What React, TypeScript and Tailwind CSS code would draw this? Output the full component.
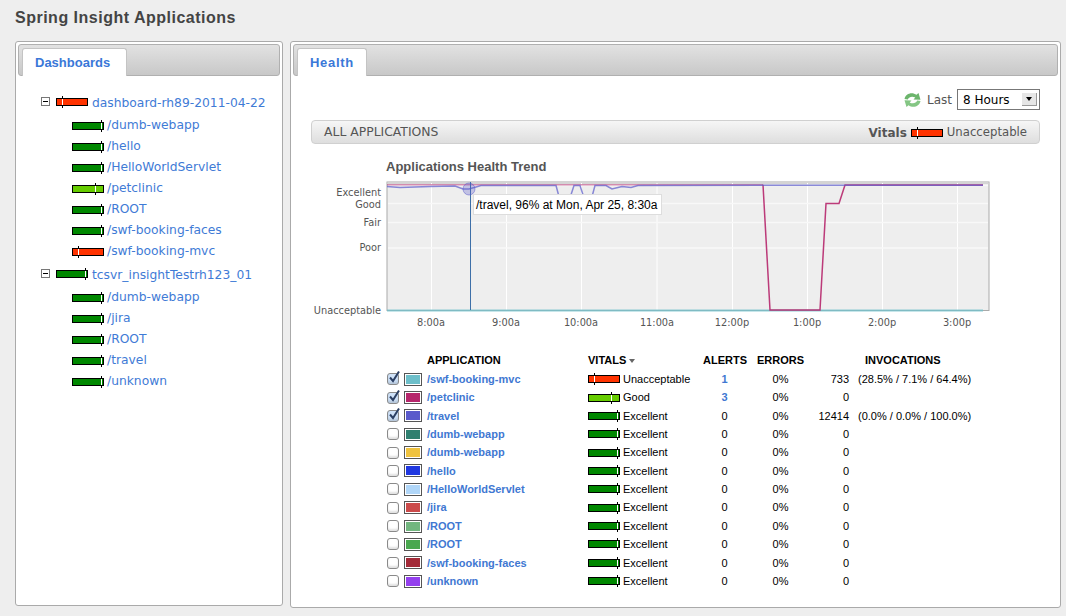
import React from 'react';

type Health = 'bad' | 'good' | 'ok';

const bars: Record<Health, { fill: string; tick: string }> = {
    bad: { fill: 'bg-[#ff3300]', tick: 'left-[5px]' },
    ok: { fill: 'bg-[#66cc00]', tick: 'left-[22px]' },
    good: { fill: 'bg-[#008800]', tick: 'left-[28px]' },
};

const VitalBar = ({ health }: { health: Health }) => (
    <span className={`relative block h-[8px] w-[32px] shrink-0 border border-black ${bars[health].fill}`}>
        <span className={`absolute top-[-3px] h-[12px] w-px bg-black ${bars[health].tick}`} />
        <span className={`absolute top-0 h-[6px] w-px bg-white ${bars[health].tick}`} />
    </span>
);

const treeGroups: { name: string; health: Health; apps: { name: string; health: Health }[] }[] = [
    {
        name: 'dashboard-rh89-2011-04-22',
        health: 'bad',
        apps: [
            { name: '/dumb-webapp', health: 'good' },
            { name: '/hello', health: 'good' },
            { name: '/HelloWorldServlet', health: 'good' },
            { name: '/petclinic', health: 'ok' },
            { name: '/ROOT', health: 'good' },
            { name: '/swf-booking-faces', health: 'good' },
            { name: '/swf-booking-mvc', health: 'bad' },
        ],
    },
    {
        name: 'tcsvr_insightTestrh123_01',
        health: 'good',
        apps: [
            { name: '/dumb-webapp', health: 'good' },
            { name: '/jira', health: 'good' },
            { name: '/ROOT', health: 'good' },
            { name: '/travel', health: 'good' },
            { name: '/unknown', health: 'good' },
        ],
    },
];

const rows = [
    { name: '/swf-booking-mvc', color: 'bg-[#6dbfca]', checked: true, health: 'bad' as Health, label: 'Unacceptable', alerts: '1', count: '733', pct: '(28.5% / 7.1% / 64.4%)' },
    { name: '/petclinic', color: 'bg-[#b6266b]', checked: true, health: 'ok' as Health, label: 'Good', alerts: '3', count: '0', pct: '' },
    { name: '/travel', color: 'bg-[#5a5acb]', checked: true, health: 'good' as Health, label: 'Excellent', alerts: '0', count: '12414', pct: '(0.0% / 0.0% / 100.0%)' },
    { name: '/dumb-webapp', color: 'bg-[#2f7f6f]', checked: false, health: 'good' as Health, label: 'Excellent', alerts: '0', count: '0', pct: '' },
    { name: '/dumb-webapp', color: 'bg-[#efc23f]', checked: false, health: 'good' as Health, label: 'Excellent', alerts: '0', count: '0', pct: '' },
    { name: '/hello', color: 'bg-[#2038e0]', checked: false, health: 'good' as Health, label: 'Excellent', alerts: '0', count: '0', pct: '' },
    { name: '/HelloWorldServlet', color: 'bg-[#b0d6f8]', checked: false, health: 'good' as Health, label: 'Excellent', alerts: '0', count: '0', pct: '' },
    { name: '/jira', color: 'bg-[#cb4a4a]', checked: false, health: 'good' as Health, label: 'Excellent', alerts: '0', count: '0', pct: '' },
    { name: '/ROOT', color: 'bg-[#72b67f]', checked: false, health: 'good' as Health, label: 'Excellent', alerts: '0', count: '0', pct: '' },
    { name: '/ROOT', color: 'bg-[#4aa84f]', checked: false, health: 'good' as Health, label: 'Excellent', alerts: '0', count: '0', pct: '' },
    { name: '/swf-booking-faces', color: 'bg-[#a32a38]', checked: false, health: 'good' as Health, label: 'Excellent', alerts: '0', count: '0', pct: '' },
    { name: '/unknown', color: 'bg-[#9440ee]', checked: false, health: 'good' as Health, label: 'Excellent', alerts: '0', count: '0', pct: '' },
];

const Tab = ({ label, className }: { label: string; className: string }) => (
    <div className="h-[32px] rounded-[3px] border border-[#b0b0b0] bg-gradient-to-b from-[#e2e2e2] to-[#c8c8c8] pl-[3px] pt-[3px]">
        <div className={`flex h-[28px] items-center rounded-t-[3px] border border-b-0 border-[#c4c4c4] bg-white pl-[12px] pt-[1px] text-[13px] font-bold text-[#3a78d8] ${className}`}>
            {label}
        </div>
    </div>
);

const Tree = () => (
    <div className="pl-[23px] pt-[16px] font-['DejaVu_Sans',sans-serif] text-[12.3px] text-[#3f7bd6]">
        {treeGroups.map((g) => (
            <div key={g.name} className="mb-[2px]">
                <div className="flex h-[23px] items-start pt-[4px]">
                    <span className="mr-[6px] mt-[1px] flex h-[9px] w-[9px] items-center justify-center border border-[#777]">
                        <span className="h-px w-[5px] bg-black" />
                    </span>
                    <span className="mt-[2px]"><VitalBar health={g.health} /></span>
                    <span className="ml-[4px] leading-[15px]">{g.name}</span>
                </div>
                {g.apps.map((a) => (
                    <div key={a.name} className="flex h-[21px] items-center pl-[31px]">
                        <VitalBar health={a.health} />
                        <span className="ml-[3px]">{a.name}</span>
                    </div>
                ))}
            </div>
        ))}
    </div>
);

const axisText = "font-['DejaVu_Sans',sans-serif]";
const yLabels: [string, number][] = [['Excellent', 196], ['Good', 208], ['Fair', 226], ['Poor', 251], ['Unacceptable', 314]];
const xLabels: [string, number][] = [['8:00a', 431], ['9:00a', 506], ['10:00a', 581], ['11:00a', 657], ['12:00p', 732], ['1:00p', 807], ['2:00p', 882], ['3:00p', 957]];

// svg coordinates are page pixels shifted by the chart's origin (310, 175)
const Chart = () => (
    <div className="relative ml-[17px] h-[155px] w-[690px]">
        <svg width="690" height="155" viewBox="310 175 690 155" className={`block ${axisText}`}>
            <rect x="387" y="182" width="602" height="128.5" fill="#eeeeee" stroke="#aaaaaa" />
            <rect x="387.5" y="182" width="601" height="2" fill="#d4d4d4" />
            {[431.5, 506.5, 581.5, 657, 732.5, 807.5, 882.5, 957.5].map((x) => (
                <line key={x} x1={x} x2={x} y1="183" y2="310" stroke="#ffffff" />
            ))}
            {[185.5, 203.5, 222.5, 248].map((y) => (
                <line key={y} x1="388" x2="988" y1={y} y2={y} stroke="#f8f8f8" strokeWidth="1.5" />
            ))}
            <polyline points="387,310.5 983,310.5" fill="none" stroke="#74bfc9" strokeWidth="2" opacity="0.8" />
            <polyline points="387,184.8 763,184.8" fill="none" stroke="#b6266b" strokeWidth="1.5" opacity="0.5" />
            <polyline
                points="763,184.8 770,310 820,310 826,203.5 839,203.5 845,185 983,185"
                fill="none"
                stroke="#b6266b"
                strokeWidth="1.5"
                opacity="0.9"
            />
            <polyline
                points="387,186.5 400,187.5 430,186.5 455,186 463,189 469,189 476,187 481,185.5 556,185.5 561,204 568,204 574,185.5 580,185.5 586,204 590,204 595,185.5 606,185.5 612,189 622,186.5 631,187.5 638,185.5 763,185.2 845,185.2 983,185.2"
                fill="none"
                stroke="#5a5acb"
                strokeWidth="1.5"
                opacity="0.7"
            />
            <line x1="470.5" x2="470.5" y1="182" y2="310" stroke="#3d6fa8" />
            <circle cx="469" cy="189" r="6" fill="#5a5acb" fillOpacity="0.3" stroke="#5a5acb" strokeOpacity="0.5" />
            {yLabels.map(([t, y]) => (
                <text key={t} x="381" y={y} textAnchor="end" fontSize="9.8" fill="#555555">{t}</text>
            ))}
            {xLabels.map(([t, x]) => (
                <text key={t} x={x} y="326" textAnchor="middle" fontSize="9.8" fill="#555555">{t}</text>
            ))}
        </svg>
        <div className="absolute left-[163px] top-[19px] flex h-[21px] w-[189px] items-center whitespace-nowrap border border-[#dddddd] bg-white pl-[2px] font-['Liberation_Sans',sans-serif] text-[12px] text-black">
            /travel, 96% at Mon, Apr 25, 8:30a
        </div>
    </div>
);

const CheckBox = ({ checked }: { checked: boolean }) => (
    <span className={`relative block h-[12px] w-[12px] rounded-[3px] border border-[#8a8a8a] shadow-[inset_0_-2px_2px_rgba(0,0,0,0.12)] ${checked ? 'bg-[#cfe2f8]' : 'bg-white'}`}>
        {checked && (
            <svg width="14" height="14" viewBox="0 0 14 14" className="absolute left-[-1px] top-[-4px]">
                <path d="M3 7.5 L6 11 L12 1.5" fill="none" stroke="#2b3f63" strokeWidth="2" />
            </svg>
        )}
    </span>
);

const gridCols = 'grid grid-cols-[17px_23px_161px_115px_43px_69px_34px_1fr] items-center';

const AppTable = () => (
    <div className="ml-[94px] mt-[21px] font-['Liberation_Sans',sans-serif] text-[11px] text-black">
        <div className={`${gridCols} mb-[1px] h-[18px] font-bold`}>
            <span />
            <span />
            <span>APPLICATION</span>
            <span className="flex items-center">
                VITALS
                <span className="ml-[3px] mt-[2px] h-0 w-0 border-x-[3px] border-t-[4px] border-x-transparent border-t-[#666]" />
            </span>
            <span className="text-center">ALERTS</span>
            <span className="text-center">ERRORS</span>
            <span className="col-span-2 pl-[50px]">INVOCATIONS</span>
        </div>
        {rows.map((r, i) => (
            <div key={i} className={`${gridCols} h-[18.36px]`}>
                <CheckBox checked={r.checked} />
                <span className="flex h-[13px] w-[18px] items-center justify-center border border-[#555] bg-white">
                    <span className={`block h-[9px] w-[14px] ${r.color}`} />
                </span>
                <span className="font-bold text-[#3f78d2]">{r.name}</span>
                <span className="flex items-center">
                    <VitalBar health={r.health} />
                    <span className="ml-[3px]">{r.label}</span>
                </span>
                <span className={`text-center ${r.alerts !== '0' ? 'font-bold text-[#3f78d2]' : ''}`}>{r.alerts}</span>
                <span className="text-center">0%</span>
                <span className="text-right">{r.count}</span>
                <span className="pl-[9px]">{r.pct}</span>
            </div>
        ))}
    </div>
);

const RefreshIcon = () => (
    <svg width="17" height="16" viewBox="0 0 17 16">
        <path d="M0.5 7 C1.5 1.5 8 -0.5 12.5 2.8 L14.5 1 L16.5 7.8 L9.5 7.6 L11.3 5.6 C8.5 4 5 4.5 3.8 7.4 Z" fill="#6cb56c" />
        <path d="M16.5 9 C15.5 14.5 9 16.5 4.5 13.2 L2.5 15 L0.5 8.2 L7.5 8.4 L5.7 10.4 C8.5 12 12 11.5 13.2 8.6 Z" fill="#84c684" />
    </svg>
);

const HealthHeader = () => (
    <div className="flex h-[44px] items-center justify-end pr-[18px] pt-[3px]">
        <RefreshIcon />
        <span className="ml-[6px] font-['DejaVu_Sans',sans-serif] text-[12px] text-[#555]">Last</span>
        <div className="ml-[5px] flex h-[21px] w-[83px] items-center justify-between border border-[#777] bg-white pl-[5px] pr-[2px] font-['DejaVu_Sans',sans-serif] text-[12px] text-black">
            8 Hours
            <span className="flex h-[13px] w-[15px] items-center justify-center border-b border-r border-[#999] bg-[#e6e6e6]">
                <span className="h-0 w-0 border-x-[3px] border-t-[4px] border-x-transparent border-t-black" />
            </span>
        </div>
    </div>
);

const App = () => {
    return (
        <div className="h-[616px] w-[1066px] overflow-hidden bg-[#eeeeee] font-['Liberation_Sans',sans-serif]">
            <h1 className="h-[41px] pl-[15px] pt-[9px] text-[16px] font-bold leading-[18px] tracking-[0.5px] text-[#444]">
                Spring Insight Applications
            </h1>
            <div className="flex items-start pl-[15px]">
                <div className="h-[565px] w-[268px] rounded-[3px] border border-[#aaaaaa] bg-white p-[2px]">
                    <Tab label="Dashboards" className="w-[105px]" />
                    <Tree />
                </div>
                <div className="ml-[7px] h-[567px] w-[771px] rounded-[3px] border border-[#aaaaaa] bg-white p-[2px]">
                    <Tab label="Health" className="w-[70px] tracking-[0.7px]" />
                    <HealthHeader />
                    <div className="ml-[18px] mr-[18px] flex h-[24px] items-center rounded-[4px] border border-[#d0d0d0] bg-gradient-to-b from-[#f6f6f6] to-[#dedede] pl-[12px] pr-[12px] pt-[1px] text-[12px] text-[#555]">
                        <span className="font-['DejaVu_Sans',sans-serif] text-[12.4px]">ALL APPLICATIONS</span>
                        <span className="ml-auto font-['DejaVu_Sans',sans-serif] text-[12px] font-bold">Vitals</span>
                        <span className="ml-[4px]"><VitalBar health="bad" /></span>
                        <span className="ml-[4px] font-['DejaVu_Sans',sans-serif] text-[11.7px]">Unacceptable</span>
                    </div>
                    <div className="pl-[93px] pt-[15px] text-[13px] font-bold leading-[16px] text-[#555]">
                        Applications Health Trend
                    </div>
                    <Chart />
                    <AppTable />
                </div>
            </div>
        </div>
    );
};

export default App;
